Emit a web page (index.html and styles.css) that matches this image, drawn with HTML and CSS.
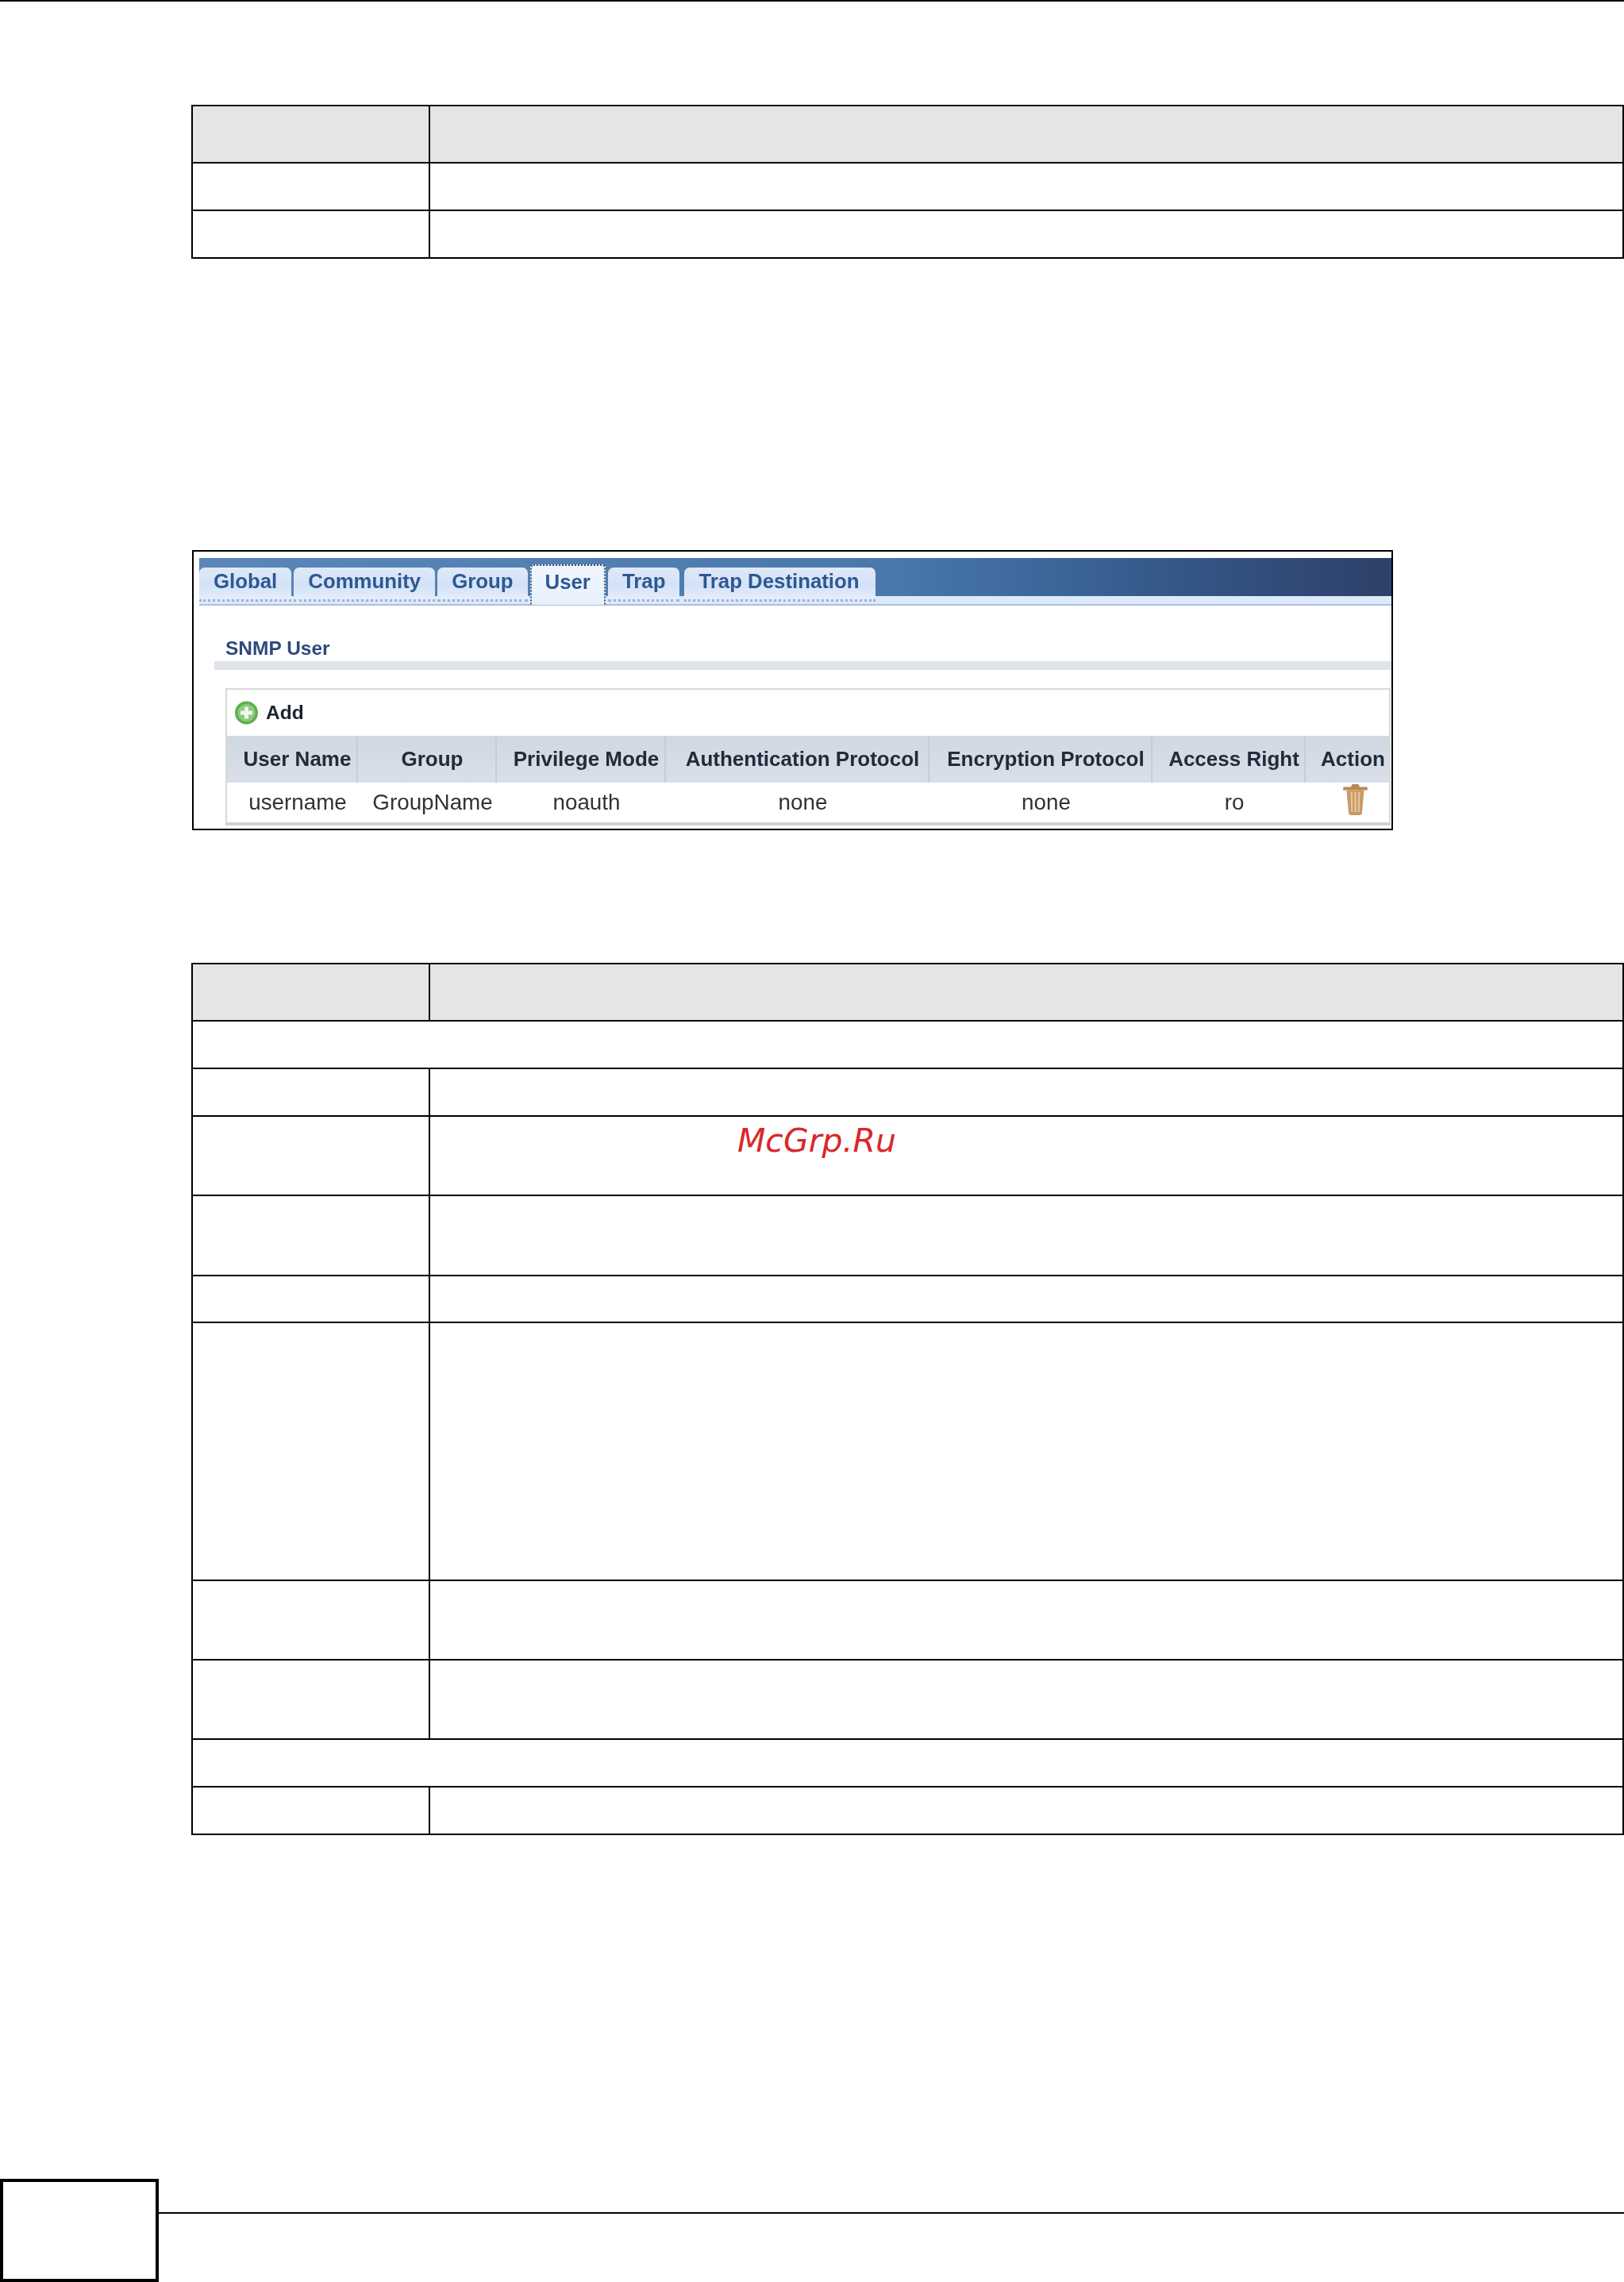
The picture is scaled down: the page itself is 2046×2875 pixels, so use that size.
FILE: index.html
```html
<!DOCTYPE html>
<html lang="en">
<head>
<meta charset="utf-8">
<title>SNMP User</title>
<link rel="stylesheet" href="styles.css">
</head>
<body>
<div class="page">
  <table class="doc doc-first">
    <tr class="r72"><th class="c1"></th><th></th></tr>
    <tr class="r60"><td class="c1"></td><td></td></tr>
    <tr class="r60"><td class="c1"></td><td></td></tr>
  </table>

  <figure class="frame">
    <div class="shot">
      <div class="tabbar">
        <span class="tab">Global</span>
        <span class="tab">Community</span>
        <span class="tab">Group</span>
        <span class="tab tab-active">User</span>
        <span class="tab">Trap</span>
        <span class="tab tab-last">Trap Destination</span>
      </div>
      <h2 class="title">SNMP User</h2>
      <div class="rule"></div>
      <div class="panel">
        <div class="addrow">
          <svg class="addicon" viewBox="0 0 31 30" aria-hidden="true">
            <circle cx="15.5" cy="15" r="14.5" fill="#5fae52"/>
            <circle cx="15.5" cy="15" r="11" fill="#8ccb7c"/>
            <path d="M13 7.5h5V12.5h5v5h-5v5h-5v-5H8v-5h5z" fill="#eef7ea"/>
          </svg>
          <span class="addlabel">Add</span>
        </div>
        <table class="list">
          <tr>
            <th class="k1">User Name</th>
            <th class="k2">Group</th>
            <th class="k3">Privilege Mode</th>
            <th class="k4">Authentication Protocol</th>
            <th class="k5">Encryption Protocol</th>
            <th class="k6">Access Right</th>
            <th class="k7">Action</th>
          </tr>
          <tr>
            <td>username</td>
            <td>GroupName</td>
            <td>noauth</td>
            <td>none</td>
            <td>none</td>
            <td>ro</td>
            <td class="actioncell">
              <svg class="trash" viewBox="0 0 31 39" aria-hidden="true">
                <path d="M10 3.5 11.5 0h8L21 3.5h9.500L31 7.500H0L.5 3.500z" fill="#b98850"/>
                <path d="M4.500 7.500h22L24 36q-.3 3-3 3H10q-2.700 0-3-3z" fill="#c99a63"/>
                <path d="M9.500 10h2.200l.6 25h-2zM14.400 10h2.200v25h-2.200zM19.300 10h2.200l-.8 25h-2z" fill="#e6c8a2"/>
              </svg>
            </td>
          </tr>
        </table>
      </div>
    </div>
  </figure>

  <table class="doc doc-second">
    <tr class="r72"><th class="c1"></th><th></th></tr>
    <tr class="r60"><td colspan="2"></td></tr>
    <tr class="r60"><td class="c1"></td><td></td></tr>
    <tr class="r100"><td class="c1"></td><td></td></tr>
    <tr class="r101"><td class="c1"></td><td></td></tr>
    <tr class="r59"><td class="c1"></td><td></td></tr>
    <tr class="r325"><td class="c1"></td><td></td></tr>
    <tr class="r100"><td class="c1"></td><td></td></tr>
    <tr class="r100"><td class="c1"></td><td></td></tr>
    <tr class="r60"><td colspan="2"></td></tr>
    <tr class="r60"><td class="c1"></td><td></td></tr>
  </table>

  <footer class="foot">
    <div class="pagebox"></div>
    <div class="footrule"></div>
  </footer>

  <div class="mark">McGrp.Ru</div>
</div>
</body>
</html>
```
FILE: styles.css
```css
* { box-sizing: border-box; }

html, body {
  margin: 0;
  padding: 0;
  background: #fff;
}

.page {
  position: relative;
  display: flex;
  flex-direction: column;
  height: 2875px;
  overflow: hidden;
  border-top: 2px solid #000;
  font-family: "Liberation Sans", Arial, sans-serif;
}

/* document tables */
.doc {
  flex: none;
  width: 1805px;
  margin-left: 241px;
  border-collapse: separate;
  border-spacing: 0;
  table-layout: fixed;
  border-top: 2px solid #000;
  border-left: 2px solid #000;
}
.doc-first { margin-top: 130px; }
.doc-second { margin-top: 167px; }

.doc th,
.doc td {
  padding: 0;
  border-right: 2px solid #000;
  border-bottom: 2px solid #000;
}
.doc th { background: #e5e5e5; }
.doc .c1 { width: 299px; }

.r72 th, .r72 td { height: 72px; }
.r60 td { height: 60px; }
.r59 td { height: 59px; }
.r100 td { height: 100px; }
.r101 td { height: 101px; }
.r325 td { height: 325px; }

/* screenshot figure */
.frame {
  flex: none;
  width: 1513px;
  height: 353px;
  margin: 367px 0 0 242px;
  padding: 8px 0 0 7px;
  border: 2px solid #000;
  background: #fff;
  overflow: hidden;
}
.shot { filter: blur(0.7px); }

.tabbar {
  display: flex;
  gap: 3px;
  height: 60px;
  padding-top: 12px;
  background:
    linear-gradient(to bottom,
      transparent 48px,
      #dce9fb 48px, #dce9fb 58px,
      #a9c0dc 58px, #a9c0dc 60px),
    linear-gradient(90deg,
      #5a86b8 0%, #5280b2 30%, #4a78ab 58%,
      #3f6b9f 68%, #355a8a 80%, #324c79 90%, #2d4069 100%);
}
.tab {
  height: 43px;
  padding: 0 18px;
  border-radius: 7px 7px 0 0;
  border-bottom: 3px dotted #9db4d4;
  background: linear-gradient(to bottom, #dfe9f8, #d3e2f8 55%, #e4eefc);
  color: #2f5890;
  font-size: 25.800px;
  font-weight: 700;
  line-height: 35px;
  white-space: nowrap;
}
.tab-active {
  height: 51px;
  margin-top: -4px;
  padding: 3px 17px 0;
  border: 2px dotted #44525f;
  border-bottom: 0;
  border-radius: 4px 4px 0 0;
  background: linear-gradient(to bottom, #f1f6fe, #e6f0fd);
}
.tab-last {
  margin-left: 3px;
  padding-right: 20px;
}

.title {
  margin: 39px 0 0 33px;
  color: #2c4a7c;
  font-size: 24.500px;
  font-weight: 700;
  line-height: 30px;
}
.rule {
  height: 11px;
  margin: 1px 0 0 19px;
  background: #dfe4ea;
}

.panel {
  width: 1468px;
  height: 173px;
  margin: 23px 0 0 33px;
  border: 2px solid #d8d8d8;
  border-bottom: 4px solid #d2d2d2;
  background: #fff;
}
.addrow {
  display: flex;
  align-items: center;
  gap: 9px;
  height: 58px;
  padding-left: 9px;
}
.addicon { width: 31px; height: 30px; }
.addlabel {
  color: #1c2230;
  font-size: 24.500px;
  font-weight: 700;
}

.list {
  width: 1464px;
  border-collapse: separate;
  border-spacing: 0;
  table-layout: fixed;
}
.list th {
  height: 59px;
  padding: 0 0 0 14px;
  border-right: 2px solid #c6cdd7;
  background: linear-gradient(to bottom, #d0d8e2, #d9dfe8);
  color: #222b3a;
  font-size: 26px;
  font-weight: 700;
  white-space: nowrap;
}
.list th:last-child { border-right: 0; }
.list td {
  height: 50px;
  padding: 0 0 0 13px;
  color: #333;
  font-size: 27.800px;
  text-align: center;
  white-space: nowrap;
}
.list .actioncell { padding-left: 20px; }
.k1 { width: 165px; }
.k2 { width: 175px; }
.k3 { width: 213px; }
.k4 { width: 332px; }
.k5 { width: 281px; }
.k6 { width: 193px; }
.k7 { width: 105px; }

.trash {
  display: block;
  width: 31px;
  height: 39px;
  margin: 0 auto 7px;
}

/* page footer */
.foot {
  display: flex;
  flex: none;
  height: 130px;
  margin-top: auto;
}
.pagebox {
  flex: none;
  width: 200px;
  height: 130px;
  border: 4px solid #000;
}
.footrule {
  flex: 1;
  height: 2px;
  margin-top: 42px;
  background: #000;
}

/* watermark */
.mark {
  position: absolute;
  top: 1411px;
  left: 929px;
  color: #d9272a;
  font-family: "DejaVu Sans", sans-serif;
  font-size: 41px;
  font-style: italic;
  line-height: 48px;
  white-space: nowrap;
}
```
